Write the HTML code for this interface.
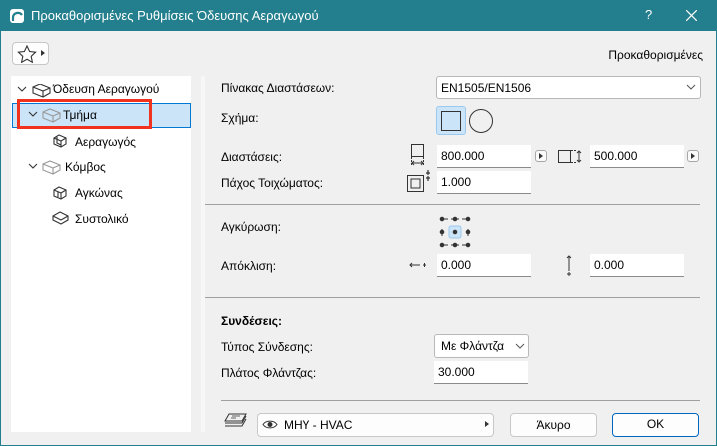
<!DOCTYPE html>
<html><head><meta charset="utf-8"><style>
*{box-sizing:border-box;margin:0;padding:0}
body{width:717px;height:446px;overflow:hidden;background:#f0f0f0;font-family:"Liberation Sans","DejaVu Sans",sans-serif;font-size:12px;color:#000;position:relative}
.a{position:absolute}
.t{position:absolute;white-space:nowrap;line-height:14px}
.in{position:absolute;background:#fff;border-bottom:1px solid #8a8a8a;padding-left:4px;line-height:22px;font-size:12px}
.hr{position:absolute;height:1px;background:#a0a0a0}
.btn{position:absolute;background:#fdfdfd;border:1px solid #c8c8c8;border-radius:4px;text-align:center}
.ab{position:absolute;width:12px;height:12px;border:1px solid #a8a8a8;border-radius:3px;background:#fafafa}
.ab:after{content:"";position:absolute;left:3px;top:2px;border-left:4px solid #333;border-top:3px solid transparent;border-bottom:3px solid transparent}
</style></head><body>
<div class="a" style="left:0;top:0;width:717px;height:446px;border:1px solid #237f8d"></div>
<div class="a" style="left:0;top:0;width:717px;height:31px;background:#237f8d"></div>
<svg class="a" style="left:9px;top:8px" width="16" height="16"><rect x="1" y="1" width="14" height="14" rx="3" fill="#fff"/><path d="M4 13V9a5 5 0 0 1 9-2" stroke="#237f8d" stroke-width="2.2" fill="none"/></svg>
<div class="t" style="left:31px;top:9px;color:#fff;font-size:13px">Προκαθορισμένες Ρυθμίσεις Όδευσης Αεραγωγού</div>
<div class="t" style="left:645px;top:8px;color:#fff;font-size:13px">?</div>
<svg class="a" style="left:686px;top:10px" width="11" height="11"><path d="M0 0L11 11M11 0L0 11" stroke="#fff" stroke-width="1.2"/></svg>

<div class="btn" style="left:12px;top:42px;width:37px;height:23px"></div>
<svg class="a" style="left:17px;top:45px" width="20" height="18"><path d="M10 1l2.6 5.5 6 .7-4.4 4.1 1.2 6L10 14.3 4.6 17.3l1.2-6L1.4 7.2l6-.7z" fill="none" stroke="#333" stroke-width="1.1"/></svg>
<div class="a" style="left:41px;top:50px;border-left:4px solid #333;border-top:3px solid transparent;border-bottom:3px solid transparent"></div>
<div class="t" style="right:14px;top:48px">Προκαθορισμένες</div>

<div class="a" style="left:11px;top:76px;width:180px;height:356px;background:#fff"></div>
<div class="a" style="left:201px;top:76px;width:4px;height:356px;background:#f7f7f7"></div>
<div class="a" style="left:12px;top:103px;width:179px;height:25px;background:#cce4f7;border:1px solid #0078d4"></div>
<div class="a" style="left:17px;top:99px;width:135px;height:30px;border:3px solid #f0321e"></div>
<svg class="a" style="left:16px;top:84px" width="180" height="150" fill="none" stroke="#333" stroke-width="1.1">
<path d="M2 3l4 4 4-4M13 80l4 4 4-4M13 28l4 4 4-4"/>
<path d="M17 3l7-3 10 4v5l-7 4-10-4zM17 3l10 4 7-3M27 7v6"/>
<g stroke="#999"><path d="M27 28l7-3 10 4v5l-7 4-10-4zM27 28l10 4 7-3M37 32v6"/><path d="M27 80l7-3 10 4v5l-7 4-10-4zM27 80l10 4 7-3M37 84v6"/></g>
<path d="M38 54l5-3 7 3v6l-5 3-7-3zM38 54l7 3 5-3M45 57v6M41 53v6l4 2"/>
<path d="M38 106l5-3 7 3v6l-5 3-7-3zM38 106l7 3 5-3M42 108v5M45 109v6"/>
<path d="M37 132l7-4 8 4v4l-7 4-8-4zM37 132l8 4 7-4"/>
</svg>
<div class="t" style="left:53px;top:82px">Όδευση Αεραγωγού</div>
<div class="t" style="left:63px;top:108px">Τμήμα</div>
<div class="t" style="left:75px;top:135px">Αεραγωγός</div>
<div class="t" style="left:65px;top:160px">Κόμβος</div>
<div class="t" style="left:75px;top:186px">Αγκώνας</div>
<div class="t" style="left:75px;top:212px">Συστολικό</div>

<div class="t" style="left:221px;top:81px">Πίνακας Διαστάσεων:</div>
<div class="in" style="left:436px;top:76px;width:265px;height:23px;border:1px solid #b8b8b8;border-radius:3px">EN1505/EN1506</div>
<svg class="a" style="left:686px;top:84px" width="10" height="6"><path d="M1 1l4 4 4-4" stroke="#555" fill="none"/></svg>
<div class="t" style="left:221px;top:111px">Σχήμα:</div>
<div class="a" style="left:436px;top:106px;width:30px;height:29px;background:#cce4f7;border:1px solid #99c9ef;border-radius:3px"></div>
<div class="a" style="left:441px;top:111px;width:20px;height:20px;border:1.5px solid #333;background:#cce4f7"></div>
<div class="a" style="left:469px;top:109px;width:24px;height:24px;border:1.2px solid #333;border-radius:50%"></div>

<div class="t" style="left:221px;top:150px">Διαστάσεις:</div>
<svg class="a" style="left:407px;top:144px" width="20" height="25" fill="none" stroke="#333"><rect x="4.5" y="0.5" width="12" height="12"/><path d="M4.5 13v8M16.5 13v8" stroke-dasharray="2 1"/><path d="M5 19h11M7 17l-2 2 2 2M14 17l2 2-2 2"/></svg>
<div class="in" style="left:437px;top:145px;width:94px;height:23px">800.000</div>
<div class="ab" style="left:535px;top:150px"></div>
<svg class="a" style="left:558px;top:147px" width="26" height="18" fill="none" stroke="#333"><rect x="0.5" y="3.5" width="12" height="12"/><path d="M13 3.5h6M13 15.5h6" stroke-dasharray="2 1"/><path d="M21 4v11M19 6l2-2 2 2M19 13l2 2 2-2"/></svg>
<div class="in" style="left:590px;top:145px;width:94px;height:23px">500.000</div>
<div class="ab" style="left:687px;top:150px"></div>
<div class="t" style="left:221px;top:176px">Πάχος Τοιχώματος:</div>
<svg class="a" style="left:406px;top:170px" width="28" height="24" fill="none" stroke="#333"><rect x="1.5" y="5.5" width="16" height="16"/><rect x="5" y="9" width="9" height="9"/><path d="M22 0v5M20 3h4M22 6v5M20 8h4" stroke-width="1.2"/></svg>
<div class="in" style="left:437px;top:171px;width:94px;height:23px">1.000</div>
<div class="hr" style="left:205px;top:204px;width:495px"></div>

<div class="t" style="left:221px;top:220px">Αγκύρωση:</div>
<svg class="a" style="left:438px;top:215px" width="34" height="34" fill="#333" stroke="#333"><g stroke-width="1"><path d="M2 4h8M13 4h8M24 4h8M4 14v7M30 14v7M2 30h8M13 30h8M24 30h8"/></g><circle cx="4" cy="4" r="1.8"/><circle cx="17" cy="4" r="1.8"/><circle cx="30" cy="4" r="1.8"/><circle cx="4" cy="17" r="1.8"/><circle cx="30" cy="17" r="1.8"/><circle cx="4" cy="30" r="1.8"/><circle cx="17" cy="30" r="1.8"/><circle cx="30" cy="30" r="1.8"/><rect x="11" y="11" width="12" height="12" rx="2" fill="#cce4f7" stroke="#99c9ef"/><circle cx="17" cy="17" r="1.8"/></svg>
<div class="t" style="left:221px;top:259px">Απόκλιση:</div>
<svg class="a" style="left:409px;top:260px" width="18" height="10" fill="none" stroke="#333"><path d="M1 5h10M3 3L1 5l2 2M14 5h3M15.5 3v4"/></svg>
<div class="in" style="left:437px;top:254px;width:94px;height:23px">0.000</div>
<svg class="a" style="left:564px;top:255px" width="10" height="22" fill="none" stroke="#333"><path d="M5 1v15M3 3l2-2 2 2M3 19h4M5 17v4"/></svg>
<div class="in" style="left:590px;top:254px;width:94px;height:23px">0.000</div>
<div class="hr" style="left:205px;top:297px;width:495px"></div>

<div class="t" style="left:221px;top:314px;font-weight:bold">Συνδέσεις:</div>
<div class="t" style="left:221px;top:340px">Τύπος Σύνδεσης:</div>
<div class="in" style="left:434px;top:334px;width:95px;height:24px;border:1px solid #b8b8b8;border-radius:3px;padding-left:6px">Με Φλάντζα</div>
<svg class="a" style="left:515px;top:343px" width="10" height="6"><path d="M1 1l4 4 4-4" stroke="#555" fill="none"/></svg>
<div class="t" style="left:221px;top:366px">Πλάτος Φλάντζας:</div>
<div class="in" style="left:434px;top:361px;width:94px;height:23px">30.000</div>
<div class="hr" style="left:221px;top:400px;width:479px"></div>

<svg class="a" style="left:224px;top:413px" width="24" height="16" fill="none" stroke="#333"><path d="M5 1h17l-4 7H1z"/><path d="M1 10h17l4-7M1 13h17l4-7" /><path d="M8 3h8M7 5h5" stroke-width=".8"/></svg>
<div class="btn" style="left:257px;top:413px;width:237px;height:24px;text-align:left;padding-left:26px;line-height:22px">МНҮ - HVAC</div>
<svg class="a" style="left:262px;top:419px" width="16" height="11" fill="none" stroke="#333"><path d="M1 5.5C4 1 12 1 15 5.5 12 10 4 10 1 5.5z"/><circle cx="8" cy="5.5" r="2" fill="#333"/></svg>
<div class="a" style="left:485px;top:421px;border-left:4px solid #333;border-top:3.5px solid transparent;border-bottom:3.5px solid transparent"></div>
<div class="btn" style="left:510px;top:413px;width:87px;height:24px;line-height:22px">Άκυρο</div>
<div class="btn" style="left:612px;top:413px;width:87px;height:24px;line-height:21px;border:1.5px solid #0067c0">OK</div>
</body></html>
